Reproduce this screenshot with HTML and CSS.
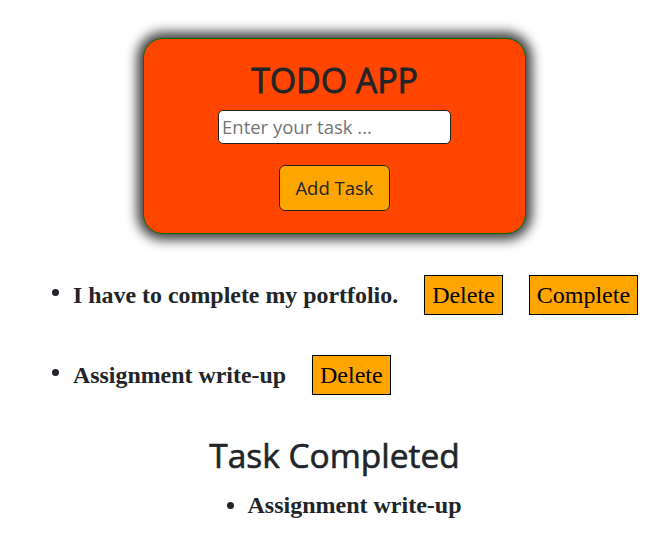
FILE: index.html
```html
<!DOCTYPE html>
<html>
<head>
<meta charset="utf-8">
<link rel="stylesheet" href="styles.css">
</head>
<body>
<div class="wrap">
  <div class="card">
    <h1 class="title">TODO APP</h1>
    <input class="task-input" type="text" placeholder="Enter your task ...">
    <button class="add-btn">Add Task</button>
  </div>
</div>
<ul class="tasks">
  <li class="task"><span class="task-text">I have to complete my portfolio.</span><button class="act">Delete</button><button class="act">Complete</button></li>
  <li class="task"><span class="task-text">Assignment write-up</span><button class="act">Delete</button></li>
</ul>
<h2 class="done-title">Task Completed</h2>
<ul class="done">
  <li class="done-item">Assignment write-up</li>
</ul>
</body>
</html>
```
FILE: styles.css
```css
* { box-sizing: border-box; }
body {
  margin: 0;
  font-family: "Open Sans", "Noto Sans", sans-serif;
  color: #212529;
  background: #fff;
}
.wrap {
  display: flex;
  justify-content: center;
  padding-top: 38px;
}
.card {
  width: 383px;
  height: 196px;
  background: #ff4500;
  border: 1px solid #0a6b0a;
  border-radius: 20px;
  box-shadow: 0 0 12px 6px rgba(0,0,0,0.75);
  display: flex;
  flex-direction: column;
  align-items: center;
}
.title {
  margin: 21px 0 0;
  font-size: 34px;
  font-weight: 400;
  -webkit-text-stroke: 0.8px #212529;
  line-height: 1.2;
  letter-spacing: -0.1px;
}
.task-input {
  margin-top: 9px;
  width: 233px;
  height: 34px;
  border: 1px solid #222;
  border-radius: 5px;
  padding: 0 3px;
  font-family: inherit;
  font-size: 18.5px;
  color: #212529;
  outline: none;
}
.task-input::placeholder { color: #757575; }
.add-btn {
  margin-top: 21px;
  width: 111px;
  height: 46px;
  background: #ffa500;
  border: 1px solid #222;
  border-radius: 6px;
  font-family: inherit;
  font-size: 18.5px;
  color: #212529;
  padding: 0;
}
.tasks {
  margin: 41px 0 0;
  padding-left: 73px;
  list-style: disc;
}
.task {
  font-family: "Liberation Serif", serif;
  font-weight: 700;
  font-size: 23.9px;
  height: 40px;
  margin-bottom: 40px;
}
.task-text { vertical-align: middle; }
.act {
  margin-left: 26px;
  height: 40px;
  padding: 0 7px;
  background: #ffa500;
  border: 1px solid #000;
  border-radius: 0;
  font-family: "Liberation Serif", serif;
  font-size: 24px;
  font-weight: 400;
  color: #000;
  vertical-align: middle;
}
.done-title {
  margin: 12px 0 0;
  text-align: center;
  font-size: 33.5px;
  font-weight: 400;
  -webkit-text-stroke: 0.6px #212529;
  line-height: 1.2;
}
.done {
  width: fit-content;
  margin: 17px auto 0;
  padding-left: 40px;
  list-style: disc;
}
.done-item {
  font-family: "Liberation Serif", serif;
  font-weight: 700;
  font-size: 24px;
}
```
